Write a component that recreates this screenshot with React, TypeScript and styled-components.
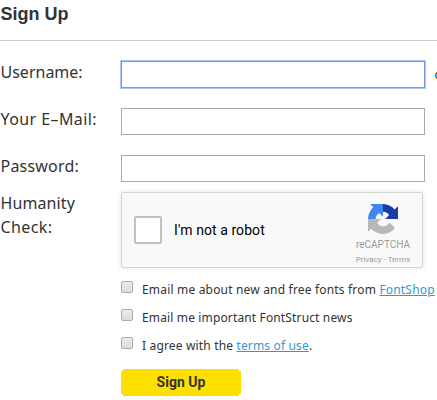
import React from "react";
import styled, { createGlobalStyle } from "styled-components";

const GlobalStyle = createGlobalStyle`
  * { box-sizing: border-box; }
  body { margin: 0; background: #fff; overflow: hidden; }
`;

const Page = styled.main`
  width: 437px;
  height: 400px;
  overflow: hidden;
  color: #333;
  font-family: "Noto Sans", sans-serif;
`;

const Title = styled.h1`
  margin: 0;
  height: 41px;
  padding: 3px 0 0 0.5px;
  border-bottom: 1px solid #ccc;
  font: bold 18px/22px "Liberation Sans", Arial, sans-serif;
`;

const Form = styled.form`
  display: flex;
  flex-direction: column;
  padding-top: 20px;
`;

const Row = styled.div<{ $height: number }>`
  display: grid;
  grid-template-columns: 121px 304px 1fr;
  align-items: start;
  height: ${(p) => p.$height}px;
`;

const Label = styled.label<{ $spacing: number }>`
  padding-left: 0.5px;
  margin-top: -1px;
  font-size: 16px;
  line-height: 24px;
  letter-spacing: ${(p) => p.$spacing}px;
`;

const LabelLine = styled.span<{ $spacing: number }>`
  display: block;
  letter-spacing: ${(p) => p.$spacing}px;
`;

const Input = styled.input<{ $active?: boolean }>`
  width: 304px;
  height: 27px;
  padding: 2px 4px;
  border: 1px solid ${(p) => (p.$active ? "#7299d8" : "#a9a9a9")};
  box-shadow: ${(p) => (p.$active ? "0 0 0 1px #a8c7fa" : "none")};
  border-radius: 0;
  outline: none;
  background: #fff;
`;

const Hint = styled.span`
  padding-left: 9.5px;
  font-size: 12px;
  line-height: 28px;
  white-space: nowrap;
`;

const Captcha = styled.div`
  display: flex;
  justify-content: space-between;
  width: 302px;
  height: 76px;
  border: 1px solid #d3d3d3;
  border-radius: 3px;
  background: #f9f9f9;
  box-shadow: 0 0 4px 1px rgba(0, 0, 0, 0.08);
  font-family: Roboto, sans-serif;
`;

const Robot = styled.div`
  display: flex;
  align-items: center;
  gap: 12px;
  padding-left: 12px;
  color: #000;
  font-size: 14px;
  letter-spacing: 0.07px;
`;

const RobotBox = styled.span`
  width: 28px;
  height: 28px;
  border: 2px solid #c1c1c1;
  border-radius: 2px;
  background: #fff;
`;

const Brand = styled.div`
  display: flex;
  flex-direction: column;
  align-items: center;
  width: 78px;
  padding-top: 11px;
  color: #9b9b9b;
`;

const BrandName = styled.span`
  margin-top: 5px;
  font-size: 10px;
  line-height: 12px;
`;

const BrandLinks = styled.span`
  margin-top: 4px;
  font-size: 8px;
  line-height: 10px;
  white-space: nowrap;
`;

const Options = styled.div`
  display: flex;
  flex-direction: column;
  padding-left: 121px;
`;

const Option = styled.label<{ $spacing: number }>`
  display: flex;
  gap: 9px;
  height: 28px;
  font-size: 12px;
  line-height: 20px;
  letter-spacing: ${(p) => p.$spacing}px;
  white-space: nowrap;
`;

const Check = styled.input`
  appearance: none;
  width: 12px;
  height: 12px;
  margin: 1px 0 0;
  border: 1px solid #acacac;
  border-radius: 2px;
  background: linear-gradient(#ececec, #dcdcdc);
`;

const Link = styled.a`
  color: #3399cc;
  text-decoration: underline;
`;

const Submit = styled.button`
  width: 120px;
  height: 27px;
  margin: 5px 0 0 121px;
  padding: 0;
  border: 0;
  background: #ffdf00;
  clip-path: polygon(2px 0, 118px 0, 118px 2px, 120px 2px, 120px 25px, 118px 25px, 118px 27px, 2px 27px, 2px 25px, 0 25px, 0 2px, 2px 2px);
  color: #333;
  font: bold 14px/27px Roboto, sans-serif;
`;

const Logo = () => (
  <svg width="30" height="30" viewBox="0 0 64 64" aria-hidden="true">
    <path fill="#1c3aa9" d="M64 31.955l-.033-1.37V4.687l-7.16 7.16C50.9 4.674 41.98.094 31.99.094c-10.4 0-19.622 4.96-25.458 12.64l11.736 11.86a15.55 15.55 0 0 1 4.754-5.334c2.05-1.6 4.952-2.906 8.968-2.906.485 0 .86.057 1.135.163 4.976.393 9.288 3.14 11.828 7.124l-8.307 8.307L64 31.953" />
    <path fill="#4285f4" d="M31.862.094l-1.37.033H4.594l7.16 7.16C4.58 13.147 0 22.067 0 32.057c0 10.4 4.96 19.622 12.64 25.458L24.5 45.779a15.55 15.55 0 0 1-5.334-4.754c-1.6-2.05-2.906-4.952-2.906-8.968 0-.485.057-.86.163-1.135.393-4.976 3.14-9.288 7.124-11.828l8.307 8.307L31.86.095" />
    <path fill="#b7b7b7" d="M.001 31.955l.033 1.37v25.898l7.16-7.16c5.86 7.173 14.774 11.754 24.764 11.754 10.4 0 19.622-4.96 25.458-12.64l-11.736-11.86a15.55 15.55 0 0 1-4.754 5.334c-2.05 1.6-4.952 2.906-8.968 2.906-.485 0-.86-.057-1.135-.163-4.976-.393-9.288-3.14-11.828-7.124l8.307-8.307L.001 31.955" />
  </svg>
);

export default function App() {
  return (
    <Page>
      <GlobalStyle />
      <Title>Sign Up</Title>
      <Form onSubmit={(e) => e.preventDefault()}>
        <Row $height={47}>
          <Label htmlFor="username" $spacing={0}>Username:</Label>
          <Input id="username" $active />
          <Hint>o</Hint>
        </Row>
        <Row $height={47}>
          <Label htmlFor="email" $spacing={0.42}>Your E–Mail:</Label>
          <Input id="email" />
        </Row>
        <Row $height={37}>
          <Label htmlFor="password" $spacing={0.2}>Password:</Label>
          <Input id="password" type="password" />
        </Row>
        <Row $height={88}>
          <Label as="div" $spacing={0}>
            <LabelLine $spacing={0.1}>Humanity</LabelLine>
            <LabelLine $spacing={0.4}>Check:</LabelLine>
          </Label>
          <Captcha>
            <Robot><RobotBox />I'm not a robot</Robot>
            <Brand>
              <Logo />
              <BrandName>reCAPTCHA</BrandName>
              <BrandLinks>Privacy - Terms</BrandLinks>
            </Brand>
          </Captcha>
        </Row>
        <Options>
          <Option $spacing={0.18}><Check type="checkbox" /><span>Email me about new and free fonts from <Link>FontShop</Link></span></Option>
          <Option $spacing={0.14}><Check type="checkbox" /><span>Email me important FontStruct news</span></Option>
          <Option $spacing={0.16}><Check type="checkbox" /><span>I agree with the <Link>terms of use</Link>.</span></Option>
        </Options>
        <Submit>Sign Up</Submit>
      </Form>
    </Page>
  );
}
